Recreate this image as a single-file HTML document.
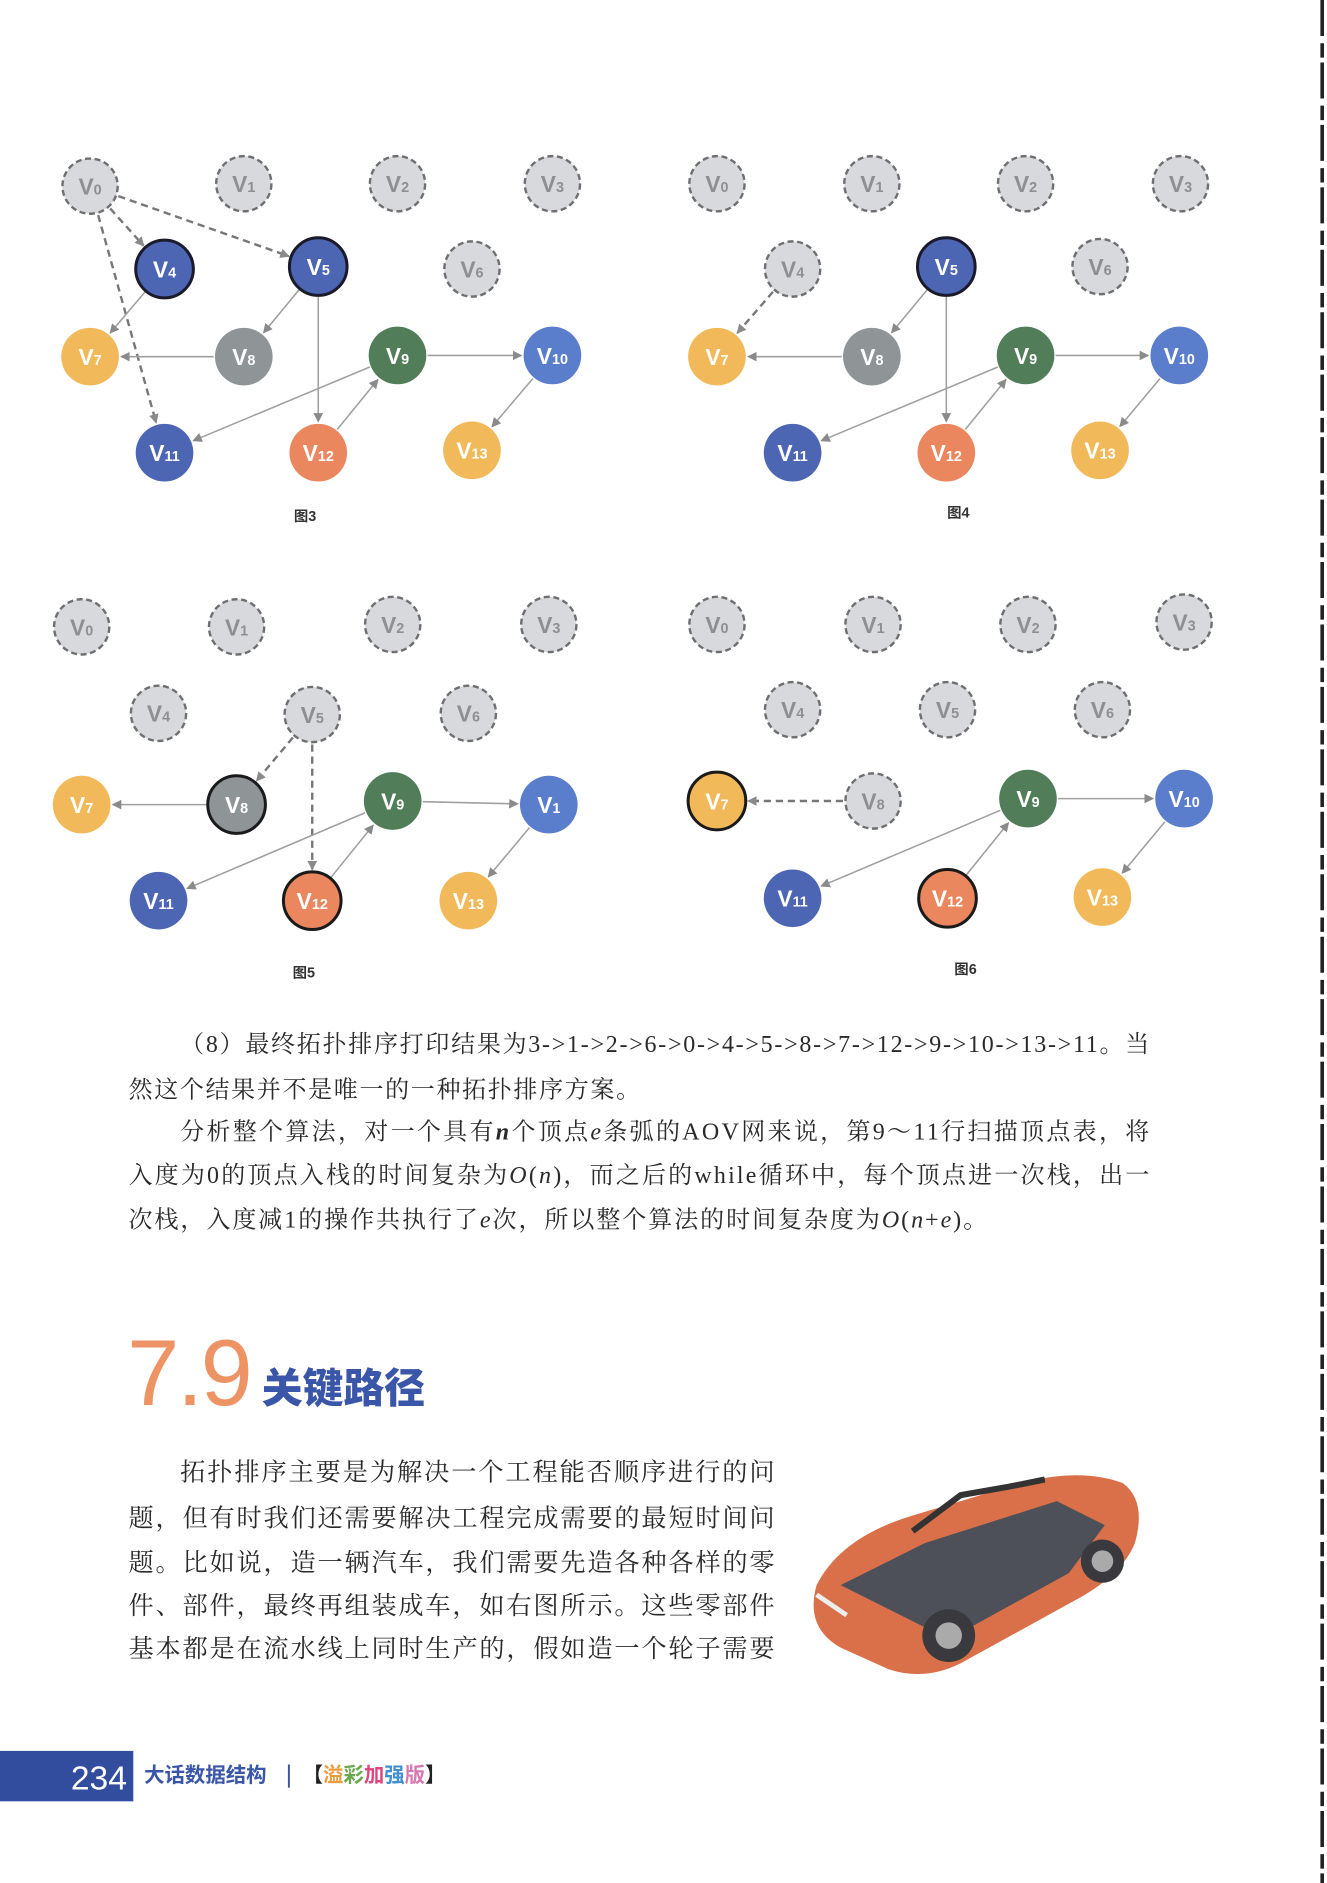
<!DOCTYPE html>
<html><head><meta charset="utf-8"><style>
html,body{margin:0;padding:0;background:#fff}
svg{display:block}
.cn{font-family:"Liberation Serif","Noto Serif CJK SC","Noto Sans CJK SC",serif;fill:#2a2a2a}
.lb{font-family:"Liberation Sans",sans-serif;font-size:19px;font-weight:bold;text-anchor:middle}
.gt{fill:#8d8f93}.wt{fill:#fff}
.gn{fill:#d7d9dd;stroke:#6f6f6f;stroke-width:2;stroke-dasharray:5 3}
</style></head><body>
<svg id="s" width="1327" height="1883" viewBox="0 0 1105 1568" xmlns="http://www.w3.org/2000/svg">
<defs>
<marker id="ar" markerWidth="8" markerHeight="8" refX="7" refY="4" orient="auto" markerUnits="userSpaceOnUse"><path d="M0,0 L8,4 L0,8 z" fill="#8a8a8a"/></marker>
</defs>
<rect width="1105" height="1568" fill="#fff"/>
<line x1="1101" y1="0" x2="1101" y2="1568" stroke="#222" stroke-width="3" stroke-dasharray="30 6 12 4"/>
<g id="edges"></g>
<g id="nodes">
<circle class="gn" cx="75" cy="155" r="23"/><text class="lb gt" x="75" y="162">V<tspan font-size="12">0</tspan></text>
<circle class="gn" cx="203" cy="153" r="23"/><text class="lb gt" x="203" y="160">V<tspan font-size="12">1</tspan></text>
<circle class="gn" cx="331" cy="153" r="23"/><text class="lb gt" x="331" y="160">V<tspan font-size="12">2</tspan></text>
<circle class="gn" cx="460" cy="153" r="23"/><text class="lb gt" x="460" y="160">V<tspan font-size="12">3</tspan></text>
<circle fill="#4c66b4" stroke="#1a1a2a" stroke-width="2.5" cx="137" cy="224" r="24"/><text class="lb wt" x="137" y="231">V<tspan font-size="12">4</tspan></text>
<circle fill="#4c66b4" stroke="#1a1a2a" stroke-width="2.5" cx="265" cy="222" r="24"/><text class="lb wt" x="265" y="229">V<tspan font-size="12">5</tspan></text>
<circle class="gn" cx="393" cy="224" r="23"/><text class="lb gt" x="393" y="231">V<tspan font-size="12">6</tspan></text>
<circle fill="#f1b95a" cx="75" cy="297" r="24"/><text class="lb wt" x="75" y="304">V<tspan font-size="12">7</tspan></text>
<circle fill="#8f9497" cx="203" cy="297" r="24"/><text class="lb wt" x="203" y="304">V<tspan font-size="12">8</tspan></text>
<circle fill="#517d59" cx="331" cy="296" r="24"/><text class="lb wt" x="331" y="303">V<tspan font-size="12">9</tspan></text>
<circle fill="#5a7dcc" cx="460" cy="296" r="24"/><text class="lb wt" x="460" y="303">V<tspan font-size="12">10</tspan></text>
<circle fill="#4c66b4" cx="137" cy="377" r="24"/><text class="lb wt" x="137" y="384">V<tspan font-size="12">11</tspan></text>
<circle fill="#ea875e" cx="265" cy="377" r="24"/><text class="lb wt" x="265" y="384">V<tspan font-size="12">12</tspan></text>
<circle fill="#f1b95a" cx="393" cy="375" r="24"/><text class="lb wt" x="393" y="382">V<tspan font-size="12">13</tspan></text>
<circle class="gn" cx="597" cy="153" r="23"/><text class="lb gt" x="597" y="160">V<tspan font-size="12">0</tspan></text>
<circle class="gn" cx="726" cy="153" r="23"/><text class="lb gt" x="726" y="160">V<tspan font-size="12">1</tspan></text>
<circle class="gn" cx="854" cy="153" r="23"/><text class="lb gt" x="854" y="160">V<tspan font-size="12">2</tspan></text>
<circle class="gn" cx="983" cy="153" r="23"/><text class="lb gt" x="983" y="160">V<tspan font-size="12">3</tspan></text>
<circle class="gn" cx="660" cy="224" r="23"/><text class="lb gt" x="660" y="231">V<tspan font-size="12">4</tspan></text>
<circle fill="#4c66b4" stroke="#1a1a2a" stroke-width="2.5" cx="788" cy="222" r="24"/><text class="lb wt" x="788" y="229">V<tspan font-size="12">5</tspan></text>
<circle class="gn" cx="916" cy="222" r="23"/><text class="lb gt" x="916" y="229">V<tspan font-size="12">6</tspan></text>
<circle fill="#f1b95a" cx="597" cy="297" r="24"/><text class="lb wt" x="597" y="304">V<tspan font-size="12">7</tspan></text>
<circle fill="#8f9497" cx="726" cy="297" r="24"/><text class="lb wt" x="726" y="304">V<tspan font-size="12">8</tspan></text>
<circle fill="#517d59" cx="854" cy="296" r="24"/><text class="lb wt" x="854" y="303">V<tspan font-size="12">9</tspan></text>
<circle fill="#5a7dcc" cx="982" cy="296" r="24"/><text class="lb wt" x="982" y="303">V<tspan font-size="12">10</tspan></text>
<circle fill="#4c66b4" cx="660" cy="377" r="24"/><text class="lb wt" x="660" y="384">V<tspan font-size="12">11</tspan></text>
<circle fill="#ea875e" cx="788" cy="377" r="24"/><text class="lb wt" x="788" y="384">V<tspan font-size="12">12</tspan></text>
<circle fill="#f1b95a" cx="916" cy="375" r="24"/><text class="lb wt" x="916" y="382">V<tspan font-size="12">13</tspan></text>
<circle class="gn" cx="68" cy="522" r="23"/><text class="lb gt" x="68" y="529">V<tspan font-size="12">0</tspan></text>
<circle class="gn" cx="197" cy="522" r="23"/><text class="lb gt" x="197" y="529">V<tspan font-size="12">1</tspan></text>
<circle class="gn" cx="327" cy="520" r="23"/><text class="lb gt" x="327" y="527">V<tspan font-size="12">2</tspan></text>
<circle class="gn" cx="457" cy="520" r="23"/><text class="lb gt" x="457" y="527">V<tspan font-size="12">3</tspan></text>
<circle class="gn" cx="132" cy="594" r="23"/><text class="lb gt" x="132" y="601">V<tspan font-size="12">4</tspan></text>
<circle class="gn" cx="260" cy="595" r="23"/><text class="lb gt" x="260" y="602">V<tspan font-size="12">5</tspan></text>
<circle class="gn" cx="390" cy="594" r="23"/><text class="lb gt" x="390" y="601">V<tspan font-size="12">6</tspan></text>
<circle fill="#f1b95a" cx="68" cy="670" r="24"/><text class="lb wt" x="68" y="677">V<tspan font-size="12">7</tspan></text>
<circle fill="#8f9497" stroke="#1a1a1a" stroke-width="2.5" cx="197" cy="670" r="24"/><text class="lb wt" x="197" y="677">V<tspan font-size="12">8</tspan></text>
<circle fill="#517d59" cx="327" cy="667" r="24"/><text class="lb wt" x="327" y="674">V<tspan font-size="12">9</tspan></text>
<circle fill="#5a7dcc" cx="457" cy="670" r="24"/><text class="lb wt" x="457" y="677">V<tspan font-size="12">1</tspan></text>
<circle fill="#4c66b4" cx="132" cy="750" r="24"/><text class="lb wt" x="132" y="757">V<tspan font-size="12">11</tspan></text>
<circle fill="#ea875e" stroke="#1a1a1a" stroke-width="2.5" cx="260" cy="750" r="24"/><text class="lb wt" x="260" y="757">V<tspan font-size="12">12</tspan></text>
<circle fill="#f1b95a" cx="390" cy="750" r="24"/><text class="lb wt" x="390" y="757">V<tspan font-size="12">13</tspan></text>
<circle class="gn" cx="597" cy="520" r="23"/><text class="lb gt" x="597" y="527">V<tspan font-size="12">0</tspan></text>
<circle class="gn" cx="727" cy="520" r="23"/><text class="lb gt" x="727" y="527">V<tspan font-size="12">1</tspan></text>
<circle class="gn" cx="856" cy="520" r="23"/><text class="lb gt" x="856" y="527">V<tspan font-size="12">2</tspan></text>
<circle class="gn" cx="986" cy="518" r="23"/><text class="lb gt" x="986" y="525">V<tspan font-size="12">3</tspan></text>
<circle class="gn" cx="660" cy="591" r="23"/><text class="lb gt" x="660" y="598">V<tspan font-size="12">4</tspan></text>
<circle class="gn" cx="789" cy="591" r="23"/><text class="lb gt" x="789" y="598">V<tspan font-size="12">5</tspan></text>
<circle class="gn" cx="918" cy="591" r="23"/><text class="lb gt" x="918" y="598">V<tspan font-size="12">6</tspan></text>
<circle fill="#f1b95a" stroke="#1a1a1a" stroke-width="2.5" cx="597" cy="667" r="24"/><text class="lb wt" x="597" y="674">V<tspan font-size="12">7</tspan></text>
<circle class="gn" cx="727" cy="667" r="23"/><text class="lb gt" x="727" y="674">V<tspan font-size="12">8</tspan></text>
<circle fill="#517d59" cx="856" cy="665" r="24"/><text class="lb wt" x="856" y="672">V<tspan font-size="12">9</tspan></text>
<circle fill="#5a7dcc" cx="986" cy="665" r="24"/><text class="lb wt" x="986" y="672">V<tspan font-size="12">10</tspan></text>
<circle fill="#4c66b4" cx="660" cy="748" r="24"/><text class="lb wt" x="660" y="755">V<tspan font-size="12">11</tspan></text>
<circle fill="#ea875e" stroke="#1a1a1a" stroke-width="2.5" cx="789" cy="748" r="24"/><text class="lb wt" x="789" y="755">V<tspan font-size="12">12</tspan></text>
<circle fill="#f1b95a" cx="918" cy="747" r="24"/><text class="lb wt" x="918" y="754">V<tspan font-size="12">13</tspan></text>
</g>
<g font-family="'Liberation Sans','Noto Sans CJK SC',sans-serif" font-size="12" font-weight="bold" fill="#333" text-anchor="middle">
<text x="254" y="434">图3</text><text x="798" y="431">图4</text><text x="253" y="814">图5</text><text x="804" y="811">图6</text>
</g>
<g class="cn" font-size="20">
<text x="150" y="876" textLength="807" lengthAdjust="spacing">（8）最终拓扑排序打印结果为3-&gt;1-&gt;2-&gt;6-&gt;0-&gt;4-&gt;5-&gt;8-&gt;7-&gt;12-&gt;9-&gt;10-&gt;13-&gt;11。当</text>
<text x="107" y="914" textLength="426" lengthAdjust="spacing">然这个结果并不是唯一的一种拓扑排序方案。</text>
<text x="150" y="949" textLength="807" lengthAdjust="spacing">分析整个算法，对一个具有<tspan font-style="italic" font-weight="bold">n</tspan>个顶点<tspan font-style="italic">e</tspan>条弧的AOV网来说，第9～11行扫描顶点表，将</text>
<text x="107" y="985" textLength="850" lengthAdjust="spacing">入度为0的顶点入栈的时间复杂为<tspan font-style="italic">O</tspan>(<tspan font-style="italic">n</tspan>)，而之后的while循环中，每个顶点进一次栈，出一</text>
<text x="107" y="1022" textLength="715" lengthAdjust="spacing">次栈，入度减1的操作共执行了<tspan font-style="italic">e</tspan>次，所以整个算法的时间复杂度为<tspan font-style="italic">O</tspan>(<tspan font-style="italic">n</tspan>+<tspan font-style="italic">e</tspan>)。</text>
</g>
<text x="106" y="1170" font-family="'Liberation Sans',sans-serif" font-size="78" font-weight="200" fill="#ee9464" style="letter-spacing:-2px">7.9</text>
<text x="218" y="1168" font-family="'Noto Sans CJK SC',sans-serif" font-size="34" font-weight="900" fill="#3a56a8">关键路径</text>
<g class="cn" font-size="21">
<text x="150" y="1233" textLength="495" lengthAdjust="spacing">拓扑排序主要是为解决一个工程能否顺序进行的问</text>
<text x="107" y="1271" textLength="538" lengthAdjust="spacing">题，但有时我们还需要解决工程完成需要的最短时间问</text>
<text x="107" y="1308" textLength="538" lengthAdjust="spacing">题。比如说，造一辆汽车，我们需要先造各种各样的零</text>
<text x="107" y="1344" textLength="538" lengthAdjust="spacing">件、部件，最终再组装成车，如右图所示。这些零部件</text>
<text x="107" y="1380" textLength="538" lengthAdjust="spacing">基本都是在流水线上同时生产的，假如造一个轮子需要</text>
</g>
<g>
<path d="M680,1320 Q700,1280 760,1262 L850,1235 Q900,1222 935,1235 Q955,1250 945,1285 Q935,1310 900,1330 L800,1385 Q770,1400 740,1390 L700,1372 Q670,1355 680,1320 Z" fill="#d9704a"/>
<path d="M700,1320 L770,1285 L880,1250 L920,1270 L890,1310 L790,1365 Z" fill="#4d5058"/>
<path d="M760,1275 L800,1245 L840,1238 L870,1232" stroke="#333" stroke-width="5" fill="none"/>
<circle cx="790" cy="1362" r="22" fill="#3a3a3e"/><circle cx="790" cy="1362" r="11" fill="#aaa"/>
<circle cx="918" cy="1300" r="18" fill="#3a3a3e"/><circle cx="918" cy="1300" r="9" fill="#aaa"/>
<path d="M680,1328 L705,1345" stroke="#eee" stroke-width="4"/>
</g>
<rect x="0" y="1458" width="111" height="42" fill="#324d9e"/>
<text x="59" y="1490" font-family="'Liberation Sans',sans-serif" font-size="28" font-weight="200" fill="#fff">234</text>
<g font-family="'Noto Sans CJK SC',sans-serif" font-size="17" font-weight="bold">
<text x="120" y="1484" fill="#3a56a8">大话数据结构</text>
<text x="238" y="1484" fill="#3a56a8">|</text>
<text x="252" y="1484" fill="#222">【<tspan fill="#ec9a3c">溢</tspan><tspan fill="#6aa84f">彩</tspan><tspan fill="#e0457b">加</tspan><tspan fill="#3f8fd2">强</tspan><tspan fill="#d678b0">版</tspan>】</text>
</g>
</svg>
<script>
var F=[
[[[75,155],[137,224],1],[[75,155],[265,222],1],[[75,155],[137,377],1],[[137,224],[75,297],0],[[265,222],[203,297],0],[[203,297],[75,297],0],[[265,222],[265,377],0],[[265,377],[331,296],0],[[331,296],[137,377],0],[[331,296],[460,296],0],[[460,296],[393,375],0]],
[[[660,224],[597,297],1],[[788,222],[726,297],0],[[726,297],[597,297],0],[[788,222],[788,377],0],[[788,377],[854,296],0],[[854,296],[660,377],0],[[854,296],[982,296],0],[[982,296],[916,375],0]],
[[[260,595],[197,670],1],[[260,595],[260,750],1],[[197,670],[68,670],0],[[260,750],[327,667],0],[[327,667],[132,750],0],[[327,667],[457,670],0],[[457,670],[390,750],0]],
[[[727,667],[597,667],1],[[789,748],[856,665],0],[[856,665],[660,748],0],[[856,665],[986,665],0],[[986,665],[918,747],0]]
];
var g=document.getElementById('edges'),h='';
F.forEach(function(f){f.forEach(function(e){var a=e[0],b=e[1],dx=b[0]-a[0],dy=b[1]-a[1],l=Math.sqrt(dx*dx+dy*dy),ux=dx/l,uy=dy/l;
h+='<line x1="'+(a[0]+ux*25)+'" y1="'+(a[1]+uy*25)+'" x2="'+(b[0]-ux*26)+'" y2="'+(b[1]-uy*26)+'" stroke="'+(e[2]?'#777':'#a0a0a0')+'" stroke-width="'+(e[2]?2:1.3)+'"'+(e[2]?' stroke-dasharray="6 4"':'')+' marker-end="url(#ar)"/>';});});
g.innerHTML=h;
</script>
</body></html>
